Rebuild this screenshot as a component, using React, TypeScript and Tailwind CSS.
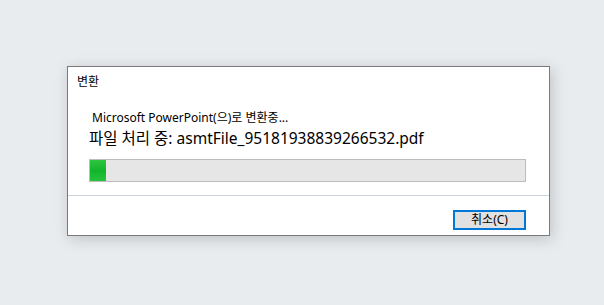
import React from "react";

const font = '"Noto Sans", "Noto Sans CJK KR", sans-serif';

export default function App() {
  return (
    <div
      className="w-[604px] h-[305px] bg-[#e9ecef] pl-[67px] pt-[66px]"
      style={{ fontFamily: font }}
    >
      <div className="w-[483px] h-[170px] bg-white border border-[#7a7a7a] shadow-[2px_3px_14px_rgba(0,0,0,0.18)] flex flex-col">
        <div className="mt-[7px] ml-[9px] h-4 leading-4 text-[12px] text-black">변환</div>
        <div className="mt-[20px] ml-[24px] h-4 leading-4 text-[12px] text-black">
          Microsoft PowerPoint(으)로 변환중...
        </div>
        <div className="mt-px ml-[21px] h-[22px] leading-[22px] text-[15.5px] text-black">
          파일 처리 중: asmtFile_95181938839266532.pdf
        </div>
        <div className="mt-[10px] ml-[21px] w-[437px] h-[23px] border border-[#bcbcbc] bg-[#e6e6e6] flex">
          <div className="w-[16px] h-full bg-gradient-to-b from-[#2ec43f] via-[#0fb52a] to-[#27c23c]" />
        </div>
        <div className="mt-[13px] h-px bg-[#ccd3da]" />
        <div className="mt-[14px] flex justify-end pr-[23px]">
          <div className="w-[73px] h-[20px] border-2 border-[#0078d7] bg-[#e1e1e1] flex items-center justify-center text-[12px] leading-4 text-black">
            취소(C)
          </div>
        </div>
      </div>
    </div>
  );
}
